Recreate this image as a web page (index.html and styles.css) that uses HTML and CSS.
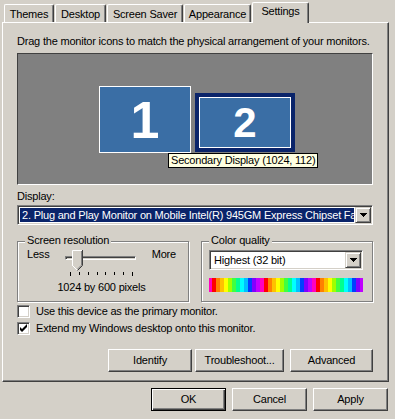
FILE: index.html
```html
<!DOCTYPE html>
<html>
<head>
<meta charset="utf-8">
<title>Display Properties</title>
<link rel="stylesheet" href="styles.css">
</head>
<body>
<div class="dialog">
  <div class="tabs">
    <div class="tab t-themes">Themes</div>
    <div class="tab t-desktop">Desktop</div>
    <div class="tab t-saver">Screen Saver</div>
    <div class="tab t-appearance">Appearance</div>
    <div class="tab active t-settings">Settings</div>
  </div>
  <div class="panel">
    <p class="intro">Drag the monitor icons to match the physical arrangement of your monitors.</p>
    <div class="canvas">
      <div class="monitor m1">1</div>
      <div class="monitor m2"><div class="m2-inner">2</div></div>
      <div class="tooltip">Secondary Display (1024, 112)</div>
    </div>
    <div class="label">Display:</div>
    <div class="combo display-combo">
      <div class="combo-value selected">2. Plug and Play Monitor on Mobile Intel(R) 945GM Express Chipset Family</div>
      <div class="combo-btn"><svg width="7" height="4" viewBox="0 0 7 4"><path d="M0 0h7v1h-1v1h-1v1h-1v1h-1v-1h-1v-1h-1v-1h-1z" fill="#000"/></svg></div>
    </div>
    <div class="groups">
      <div class="group res">
        <span class="legend">Screen resolution</span>
        <div class="slider-row">
          <span class="less">Less</span>
          <div class="slider">
            <div class="track"></div>
            <svg class="thumb" width="11" height="21" viewBox="0 0 11 21">
              <path d="M0 0H11V16L5.5 21.5L0 16Z" fill="#D4D0C8"/>
              <polyline points="0.5,16 0.5,0.5 10,0.5" fill="none" stroke="#fff"/>
              <polyline points="0.5,15.5 5.5,20.5" fill="none" stroke="#fff"/>
              <polyline points="10.5,0 10.5,15.5 5.5,20.5" fill="none" stroke="#404040"/>
              <polyline points="9.5,1 9.5,15.1 5.5,19.1" fill="none" stroke="#808080"/>
            </svg>
            <div class="ticks">
              <i class="tick long"></i><i class="tick"></i><i class="tick"></i><i class="tick"></i><i class="tick"></i><i class="tick"></i><i class="tick"></i><i class="tick long"></i>
            </div>
          </div>
          <span class="more">More</span>
        </div>
        <div class="res-text">1024 by 600 pixels</div>
      </div>
      <div class="group color">
        <span class="legend">Color quality</span>
        <div class="combo color-combo">
          <div class="combo-value">Highest (32 bit)</div>
          <div class="combo-btn"><svg width="7" height="4" viewBox="0 0 7 4"><path d="M0 0h7v1h-1v1h-1v1h-1v1h-1v-1h-1v-1h-1v-1h-1z" fill="#000"/></svg></div>
        </div>
        <div class="colorbar"></div>
      </div>
    </div>
    <div class="check-row first"><span class="checkbox"></span><span>Use this device as the primary monitor.</span></div>
    <div class="check-row"><span class="checkbox"><svg width="11" height="11" viewBox="0 0 11 11"><polygon points="2,4 4,6 9,1 9,4 4,9 2,7" fill="#000"/></svg></span><span>Extend my Windows desktop onto this monitor.</span></div>
    <div class="panel-buttons">
      <button class="btn b-identify">Identify</button>
      <button class="btn b-trouble">Troubleshoot...</button>
      <button class="btn b-advanced">Advanced</button>
    </div>
  </div>
  <div class="footer">
    <button class="btn default">OK</button>
    <button class="btn">Cancel</button>
    <button class="btn">Apply</button>
  </div>
</div>
</body>
</html>
```
FILE: styles.css
```css
* { box-sizing: border-box; }
html, body { margin: 0; padding: 0; }
body {
  width: 395px;
  height: 419px;
  overflow: hidden;
  background: #D4D0C8;
  font-family: "Liberation Sans", Arial, sans-serif;
  font-size: 11px;
  line-height: 13px;
  letter-spacing: -0.2px;
  color: #000;
}
.dialog { padding: 2px 0 0 2px; }

/* tabs */
.tabs { display: flex; align-items: flex-end; height: 20px; padding-left: 2px; }
.tab {
  height: 18px;
  margin-right: 1px;
  padding-top: 3px;
  text-align: center;
  white-space: nowrap;
  background: #D4D0C8;
  border-top: 1px solid #fff;
  border-left: 1px solid #fff;
  border-right: 1px solid #404040;
  border-radius: 2px 2px 0 0;
  box-shadow: inset -1px 0 0 #808080;
}
.tab.active { height: 21px; margin-bottom: -1px; padding-top: 2px; position: relative; z-index: 1; }
.t-themes { width: 50px; }
.t-desktop { width: 51px; }
.t-saver { width: 76px; }
.t-appearance { width: 67px; }
.t-settings { width: 57px; }

/* panel */
.panel {
  width: 387px;
  height: 360px;
  border-top: 1px solid #fff;
  border-left: 1px solid #fff;
  border-right: 1px solid #404040;
  border-bottom: 1px solid #404040;
  box-shadow: inset -1px -1px 0 #808080;
  padding: 12px 15px 0 14px;
}
.intro { margin: 0 0 5px; white-space: nowrap; }

.canvas {
  position: relative;
  height: 132px;
  background: #808080;
  border: 1px solid;
  border-color: #404040 #fff #fff #404040;
}
.monitor {
  position: absolute;
  display: flex;
  align-items: center;
  justify-content: center;
  color: #fff;
  font-weight: bold;
  letter-spacing: 0;
  line-height: 1;
}
.m1 { left: 81px; top: 32px; width: 92px; height: 67px; background: #3A6EA5; border: 1px solid #fff; font-size: 52px; }
.m2 { left: 177px; top: 39px; width: 100px; height: 59px; background: #0A246A; padding: 4px; }
.m2-inner {
  width: 100%;
  height: 100%;
  border: 1px solid #fff;
  background: #3A6EA5;
  display: flex;
  align-items: center;
  justify-content: center;
  font-size: 42px;
}
.tooltip {
  position: absolute;
  left: 150px;
  top: 99px;
  height: 15px;
  padding: 0 2px;
  border: 1px solid #000;
  background: #FFFFE1;
  white-space: nowrap;
  z-index: 2;
}

.label { margin-top: 5px; }

/* combo boxes */
.combo {
  display: flex;
  height: 20px;
  background: #fff;
  border: 1px solid;
  border-color: #808080 #fff #fff #808080;
  box-shadow: inset 1px 1px 0 #404040, inset -1px -1px 0 #D4D0C8;
  padding: 1px;
}
.display-combo { margin-top: 2px; }
.combo-value { flex: 1; min-width: 0; overflow: hidden; white-space: nowrap; padding-left: 3px; line-height: 16px; }
.combo-value.selected { background: #0A246A; color: #fff; margin: 1px; padding-left: 2px; line-height: 14px; }
.combo-btn {
  flex: none;
  width: 16px;
  height: 16px;
  background: #D4D0C8;
  border: 1px solid;
  border-color: #D4D0C8 #404040 #404040 #D4D0C8;
  box-shadow: inset 1px 1px 0 #fff, inset -1px -1px 0 #808080;
  display: flex;
  align-items: center;
  justify-content: center;
}
.combo-btn svg { display: block; }

/* group boxes */
.groups { display: flex; gap: 12px; margin-top: 10px; padding-top: 6px; }
.group {
  position: relative;
  width: 172px;
  height: 61px;
  border: 1px solid #808080;
  box-shadow: inset 1px 1px 0 #fff, 1px 1px 0 #fff;
}
.legend {
  position: absolute;
  top: -8px;
  left: 7px;
  padding: 0 2px;
  background: #D4D0C8;
  white-space: nowrap;
}
.res { padding: 6px 12px 0 9px; }
.slider-row { display: flex; height: 30px; }
.less { width: 35px; flex: none; }
.more { margin-left: auto; }
.slider { position: relative; width: 80px; height: 30px; flex: none; }
.track {
  position: absolute;
  left: 3px;
  top: 8px;
  width: 71px;
  height: 4px;
  background: #D4D0C8;
  border: 1px solid;
  border-color: #808080 #fff #fff #808080;
  box-shadow: inset 1px 1px 0 #404040;
}
.thumb { position: absolute; left: 10px; top: 2px; display: block; }
.ticks { position: absolute; left: 8px; top: 24px; width: 63px; display: flex; justify-content: space-between; align-items: flex-start; }
.tick { display: block; width: 1px; height: 3px; background: #000; }
.tick.long { height: 4px; }
.res-text { text-align: center; margin-top: 3px; }

.color { padding: 8px 0 0 7px; }
.color-combo { width: 154px; }
.colorbar {
  width: 154px;
  height: 14px;
  margin-top: 8px;
  background-image: linear-gradient(to right,
    #ff0000 0 4px, #ff8000 4px 8px, #ffc000 8px 12px, #ffff00 12px 16px,
    #a0ff00 16px 20px, #40ff40 20px 24px, #00ff90 24px 28px, #00ffff 28px 32px,
    #00c0ff 32px 36px, #0040ff 36px 40px, #8000ff 40px 44px, #c000ff 44px 48px,
    #ff00c0 48px 52px);
  background-size: 52px 100%;
  background-position: 3px 0;
  background-repeat: repeat-x;
}

/* checkboxes */
.check-row { display: flex; align-items: center; height: 13px; margin-top: 4px; white-space: nowrap; }
.check-row.first { margin-top: 3px; }
.checkbox {
  flex: none;
  display: block;
  width: 13px;
  height: 13px;
  margin-right: 6px;
  background: #fff;
  border: 1px solid;
  border-color: #808080 #fff #fff #808080;
  box-shadow: inset 1px 1px 0 #404040, inset -1px -1px 0 #D4D0C8;
}
.checkbox svg { display: block; }

/* buttons */
.btn {
  font: inherit;
  letter-spacing: inherit;
  color: #000;
  height: 23px;
  padding: 0;
  background: #D4D0C8;
  border: 1px solid;
  border-color: #fff #404040 #404040 #fff;
  box-shadow: inset -1px -1px 0 #808080;
}
.panel-buttons { display: flex; justify-content: flex-end; margin-top: 14px; }
.b-identify { width: 84px; }
.b-trouble { width: 89px; margin-left: 3px; }
.b-advanced { width: 83px; margin-left: 6px; }

.footer { display: flex; justify-content: flex-end; gap: 6px; margin-top: 6px; padding-right: 7px; }
.footer .btn { width: 75px; }
.btn.default {
  border: 1px solid #000;
  box-shadow: inset 1px 1px 0 #fff, inset -1px -1px 0 #404040, inset -2px -2px 0 #808080;
}
```
